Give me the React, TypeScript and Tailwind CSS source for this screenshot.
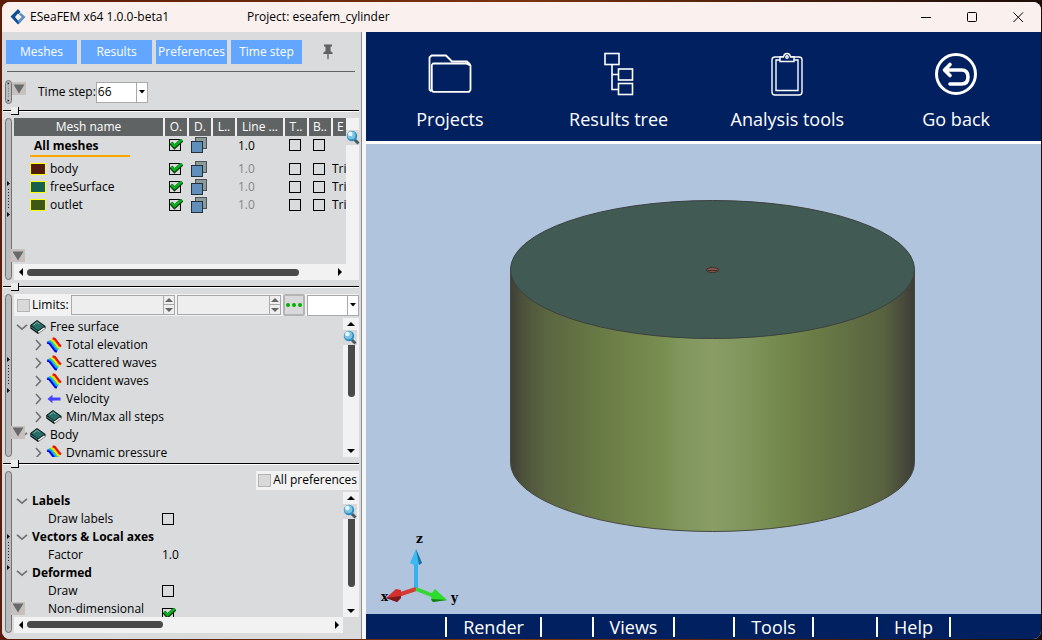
import React, { useState } from 'react';
import clsx from 'clsx';

const meshes = [
  { name: 'body', swatch: 'bg-[#4f1a10]' },
  { name: 'freeSurface', swatch: 'bg-[#18604f]' },
  { name: 'outlet', swatch: 'bg-[#3f5714]' },
];

const results = [
  { name: 'Free surface', icon: 'book', level: 0 },
  { name: 'Total elevation', icon: 'contour', level: 1 },
  { name: 'Scattered waves', icon: 'contour', level: 1 },
  { name: 'Incident waves', icon: 'contour', level: 1 },
  { name: 'Velocity', icon: 'arrow', level: 1 },
  { name: 'Min/Max all steps', icon: 'book', level: 1 },
  { name: 'Body', icon: 'book', level: 0 },
  { name: 'Dynamic pressure', icon: 'contour', level: 1 },
];

/* ---------- Icons ---------- */

const LogoIcon = () => (
  <svg width="16" height="16" viewBox="0 0 16 16" className="shrink-0">
    <path d="M8 0 L0.5 7.5 L8 15.5 L10.5 13 L6 8 L10.5 3 Z" fill="#0b4f96" />
    <path d="M11 4 L15.5 8 L9.5 14.5 L7.5 12 L11.5 8 L8.5 5.5 Z" fill="#5d8fc4" />
    <path d="M8 4.5 L11.5 8 L8 11.5 L5 8 Z" fill="#faf1ee" />
  </svg>
);

const PinIcon = () => (
  <svg width="12" height="16" viewBox="0 0 12 16" fill="#5f6363">
    <path d="M2 0.5 h8 v2 h-1.5 v4.5 q2.3 0.8 2.3 3 h-9.6 q0 -2.2 2.3 -3 V2.5 H2 Z" />
    <path d="M5.3 10 h1.4 v4 l-0.7 2 l-0.7 -2 Z" />
  </svg>
);

const MagnifierIcon = () => (
  <svg width="14" height="15" viewBox="0 0 14 15">
    <rect width="14" height="15" fill="#d9d9dc" />
    <path d="M8.5 9.5 L12.5 13.5" stroke="#4d5960" strokeWidth="3" />
    <circle cx="6" cy="6" r="5.2" fill="#2f8fc0" />
    <circle cx="5.4" cy="5.2" r="4" fill="#7cc3e4" />
    <circle cx="4.4" cy="4" r="2.2" fill="#e8f7ff" />
  </svg>
);

const BookIcon = () => (
  <svg width="16" height="14" viewBox="0 0 16 14" className="shrink-0">
    <path d="M0.3 5 L7 0 L15.5 6 V8.6 L8 14 L0.3 8.5 Z" fill="#0c1212" />
    <path d="M1.3 5.2 L7 1 L14.3 6.2 L8 10.6 Z" fill="#276e68" />
    <path d="M3.6 5 L7.2 2.4 L9.5 4" stroke="#77b5ad" fill="none" />
    <path d="M8.3 12.3 L14.6 7.8" stroke="#ffffff" strokeWidth="1.5" fill="none" />
    <path d="M1.2 7 L7.6 11.6" stroke="#2f7f78" strokeWidth="1.2" fill="none" />
  </svg>
);

const ContourIcon = () => (
  <svg width="16" height="16" viewBox="0 0 16 16" fill="none" strokeWidth="2" className="shrink-0">
    <path d="M1.2 5.4 L3.4 6 L9.6 14 L11 14.2" stroke="#0000e8" strokeWidth="2.6" />
    <path d="M2.6 4.2 L4.8 5 L10.4 12.4 L12 12.8" stroke="#0aa8ff" />
    <path d="M4 3.4 L6 4 L11.4 11 L12.8 11.8" stroke="#3fe04a" strokeWidth="1.4" />
    <path d="M5.2 2.8 L7 3.2 L12.2 10 L13.4 10.6" stroke="#ffe500" />
    <path d="M6.6 1.4 L8.8 2 L13.6 8.4 L15 9.2" stroke="#f01000" strokeWidth="2.4" />
  </svg>
);

const VelocityIcon = () => (
  <svg width="14" height="10" viewBox="0 0 14 10" fill="#4444ff">
    <path d="M0.5 5 L5.5 0.8 V3.6 H13.5 V6.4 H5.5 V9.2 Z" />
  </svg>
);

const LayersIcon = () => (
  <svg width="17" height="16" viewBox="0 0 17 16">
    <rect x="4.5" y="0.5" width="11" height="11" fill="#8d9a9b" stroke="#4b5354" />
    <rect x="0.5" y="4.5" width="11" height="11" fill="#5f8fba" stroke="#23303a" />
  </svg>
);

const Chevron: React.FC<{ open?: boolean }> = ({ open }) => (
  <svg width="12" height="12" viewBox="0 0 12 12" fill="none" stroke="#6f7173" strokeWidth="1.6">
    {open ? <path d="M1 3.8 L6 8.2 L11 3.8" /> : <path d="M4 1 L8.5 6 L4 11" />}
  </svg>
);

const FolderIcon = () => (
  <svg width="44" height="42" viewBox="0 0 44 42" fill="none" stroke="#fff" strokeWidth="1.8" strokeLinejoin="round">
    <path d="M3.5 38.5 L1.5 36.5 V4.5 L3.5 2.5 H18 L24 8.5 H39 L42.5 12" />
    <path d="M5 10.5 H38 L42.5 12.5 V37 L41 38.8 H5 L3.8 37 V12 Z" />
    <path d="M24 8.5 H37 Q40 8.5 40 11" strokeWidth="1" />
  </svg>
);

const TreeIcon = () => (
  <svg width="30" height="44" viewBox="0 0 30 44" fill="none" stroke="#fff" strokeWidth="1.6">
    <rect x="1" y="1.5" width="14" height="11" />
    <rect x="14.5" y="17" width="14" height="11" />
    <rect x="14.5" y="31.5" width="14" height="11" />
    <path d="M8 12.5 V37.5 H14.5 M8 22.5 H14.5" />
  </svg>
);

const ClipboardIcon = () => (
  <svg width="32" height="44" viewBox="0 0 32 44" fill="none" stroke="#fff" strokeWidth="1.4">
    <rect x="1" y="5" width="30" height="38" rx="3" />
    <path d="M9 8 H5 V38.5 H27 V8 H23" />
    <path d="M9 5 H12.5 Q13 1.5 16 1.5 Q19 1.5 19.5 5 H23 V9.5 H9 Z" fill="#00205f" />
    <circle cx="16" cy="5" r="1.2" />
  </svg>
);

const GoBackIcon = () => (
  <svg width="44" height="44" viewBox="0 0 44 44" fill="none" stroke="#fff" strokeLinecap="round" strokeLinejoin="round">
    <circle cx="22" cy="22" r="19.5" strokeWidth="3" />
    <path d="M16 12.5 L10.5 18 L16 23.5 M11 18 H27.5 Q34 18 34 25 Q34 32 27.5 32 H16" strokeWidth="3.6" />
  </svg>
);

/* ---------- Small controls ---------- */

interface CheckProps {
  label: string;
  checked?: boolean;
  grey?: boolean;
}

const Check: React.FC<CheckProps> = ({ label, checked = false, grey }) => {
  const [on, setOn] = useState(checked);
  return (
    <span className="relative flex">
      <input
        type="checkbox"
        aria-label={label}
        checked={on}
        onChange={() => setOn(!on)}
        className={clsx(
          'm-0 appearance-none border',
          grey ? 'size-[13px] border-[#b4b4b4] bg-[#d9d9d9]' : 'size-3 border-black'
        )}
      />
      {on && (
        <svg width="14" height="12" viewBox="0 0 14 12" className="pointer-events-none absolute left-0 top-0">
          <path d="M2 4 L5.5 8 L13 1" stroke="#0b3d0b" strokeWidth="4" fill="none" />
          <path d="M2 3.5 L5.5 7 L13 0.500" stroke="#0cb020" strokeWidth="2.400" fill="none" />
        </svg>
      )}
    </span>
  );
};

const Grip: React.FC = () => (
  <div className="flex w-[7px] shrink-0 flex-col items-center justify-center rounded-sm border border-[#6f7173] bg-[#babbbc]">
    <svg width="5" height="40" viewBox="0 0 5 40" className="max-h-full">
      <path d="M1 2 L4 4.5 L1 7 Z M1 33 L4 35.5 L1 38 Z" fill="#111" />
      <path d="M2.5 10 V31" stroke="#222" strokeDasharray="1 2" />
    </svg>
  </div>
);

const Fold: React.FC<{ className?: string }> = ({ className }) => (
  <button aria-label="Collapse panel" className={clsx('flex h-[13px] w-[14px] items-center justify-center bg-[#c8bfbf]', className)}>
    <svg width="12" height="10" viewBox="0 0 12 10">
      <path d="M0.5 0.5 H11.5 L6 9.5 Z" fill="#666a6a" />
    </svg>
  </button>
);

const Sash = () => (
  <div className="relative flex h-[14px] shrink-0 items-center">
    <div className="h-0.5 w-full border-b border-white bg-black" />
    <div className="absolute left-2 top-[3px] size-2 border-b border-r border-black bg-[#ececec]" />
  </div>
);

type Direction = 'up' | 'down' | 'left' | 'right';

const arrowPaths: Record<Direction, string> = {
  up: 'M0 6 L4 2 L8 6 Z',
  down: 'M0 2 L4 6 L8 2 Z',
  left: 'M6 0 L2 4 L6 8 Z',
  right: 'M2 0 L6 4 L2 8 Z',
};

const ArrowButton: React.FC<{ dir: Direction; className?: string; fill?: string }> = ({ dir, className, fill = '#000' }) => (
  <button aria-label={`Scroll ${dir}`} className={clsx('flex shrink-0 items-center justify-center', className)}>
    <svg width="8" height="8" viewBox="0 0 8 8" fill={fill}>
      <path d={arrowPaths[dir]} />
    </svg>
  </button>
);

const VerticalBar: React.FC<{ thumb: string }> = ({ thumb }) => (
  <div className="relative flex w-4 shrink-0 flex-col items-center bg-[#f2f2f2]">
    <ArrowButton dir="up" className="h-3 w-full" />
    <div className="w-full flex-1">
      <div className={clsx('mx-auto w-[7px] rounded-full bg-[#4a4a4a]', thumb)} />
    </div>
    <ArrowButton dir="down" className="h-3 w-full" />
    <div className="absolute left-0 top-3">
      <MagnifierIcon />
    </div>
  </div>
);

const HorizontalBar: React.FC<{ thumb: string; right: string }> = ({ thumb, right }) => (
  <div className={clsx('flex h-4 shrink-0 items-center bg-[#f2f2f2]', right)}>
    <ArrowButton dir="left" className="h-full w-[13px]" />
    <div className="flex-1">
      <div className={clsx('h-[7px] rounded-full bg-[#4a4a4a]', thumb)} />
    </div>
    <ArrowButton dir="right" className="h-full w-[13px]" />
  </div>
);

const SpinBox: React.FC<{ label: string }> = ({ label }) => (
  <div className="flex h-5 min-w-0 flex-1 border border-[#a9a9a9] bg-[#eeeeee]">
    <input aria-label={label} className="w-0 min-w-0 flex-1 px-1 outline-none" />
    <div className="flex w-[11px] flex-col border-l border-[#a9a9a9]">
      <ArrowButton dir="up" fill="#666" className="h-[9px] border-b border-[#a9a9a9]" />
      <ArrowButton dir="down" fill="#666" className="h-[9px]" />
    </div>
  </div>
);

const Combo: React.FC<{ label: string; options: string[]; className?: string }> = ({ label, options, className }) => (
  <div className={clsx('relative flex h-[21px] shrink-0 border border-[#a9a9a9] bg-white', className)}>
    <select aria-label={label} className="h-full w-full appearance-none px-px outline-none">
      {options.map((o) => (
        <option key={o}>{o}</option>
      ))}
    </select>
    <div className="pointer-events-none absolute right-0 top-0 flex h-full w-[11px] items-center justify-center border-l border-[#a9a9a9]">
      <svg width="6" height="4" viewBox="0 0 6 4">
        <path d="M0 0 H6 L3 3.5 Z" />
      </svg>
    </div>
  </div>
);

/* ---------- Left side panels ---------- */

const headClass = 'h-[18px] truncate border-r-2 border-[#f0f0f0] p-0 text-center font-normal';

const IconCell: React.FC<{ children: React.ReactNode }> = ({ children }) => (
  <td className="p-0">
    <div className="flex h-[18px] items-center justify-center pr-0.5">{children}</div>
  </td>
);

const MeshPanel = () => (
  <section className="relative flex min-h-0 min-w-0 flex-1 gap-0.5">
    <Grip />
    <div className="flex min-w-0 flex-1 flex-col">
      <div className="flex min-h-0 flex-1">
        <div className="min-w-0 flex-1 overflow-hidden">
          <table className="w-[342px] table-fixed border-collapse">
            <colgroup>
              <col className="w-[150px]" />
              <col className="w-6" />
              <col className="w-6" />
              <col className="w-6" />
              <col className="w-12" />
              <col className="w-6" />
              <col className="w-6" />
              <col className="w-6" />
            </colgroup>
            <thead className="bg-[#5f6363] text-white">
              <tr>
                {['Mesh name', 'O.', 'D.', 'L..', 'Line ...', 'T..', 'B..'].map((h) => (
                  <th key={h} className={headClass}>{h}</th>
                ))}
                <th className="p-0 pl-1 text-left font-normal">E</th>
              </tr>
            </thead>
            <tbody>
              <tr className="h-6 align-top">
                <td className="p-0">
                  <div className="ml-4 w-[100px] border-b-2 border-[#ffa500] pl-1 leading-[19px] font-bold">All meshes</div>
                </td>
                <IconCell><Check label="All meshes on" checked /></IconCell>
                <IconCell><LayersIcon /></IconCell>
                <td />
                <td className="p-0 pl-0.5 leading-[19px]">1.0</td>
                <IconCell><Check label="All meshes transparent" /></IconCell>
                <IconCell><Check label="All meshes border" /></IconCell>
                <td />
              </tr>
              {meshes.map((m) => (
                <tr key={m.name} className="h-[18px] leading-[18px]">
                  <td className="p-0">
                    <div className="flex items-center gap-1 pl-4">
                      <span className={clsx('h-3 w-4 border border-[#ffff00]', m.swatch)} />
                      {m.name}
                    </div>
                  </td>
                  <IconCell><Check label={`${m.name} on`} checked /></IconCell>
                  <IconCell><LayersIcon /></IconCell>
                  <td />
                  <td className="p-0 pl-0.5 text-[#858789]">1.0</td>
                  <IconCell><Check label={`${m.name} transparent`} /></IconCell>
                  <IconCell><Check label={`${m.name} border`} /></IconCell>
                  <td className="p-0">Tri</td>
                </tr>
              ))}
            </tbody>
          </table>
        </div>
        <div className="relative w-[13px] shrink-0 bg-[#f2f2f2]">
          <div className="absolute left-0 top-3">
            <MagnifierIcon />
          </div>
        </div>
      </div>
      <HorizontalBar thumb="w-[89%]" right="pr-[13px]" />
    </div>
    <Fold className="absolute bottom-[18px] left-1.5" />
  </section>
);

const ResultsPanel = () => (
  <section className="relative flex min-h-0 min-w-0 flex-1 gap-0.5">
    <Grip />
    <div className="flex min-w-0 flex-1 flex-col">
      <div className="mb-0.5 flex h-[22px] shrink-0 items-center gap-0.5 bg-[#f2f2f2] pl-[3px]">
        <label className="flex items-center gap-0.5">
          <Check label="Limits" grey />
          Limits:
        </label>
        <SpinBox label="Minimum" />
        <SpinBox label="Maximum" />
        <button aria-label="More options" className="flex h-[22px] w-[22px] items-center justify-center gap-0.5 rounded-xs border-2 border-[#b4b4b4] bg-[#d9d9d9]">
          <span className="size-1 rounded-full bg-[#00b000]" />
          <span className="size-1 rounded-full bg-[#00b000]" />
          <span className="size-1 rounded-full bg-[#00b000]" />
        </button>
        <Combo label="Units" options={['']} className="w-[52px]" />
      </div>
      <div className="flex min-h-0 flex-1">
        <ul className="min-w-0 flex-1 overflow-hidden">
          {results.map((r) => (
            <li key={r.name} className={clsx('flex h-[18px] items-center', r.level ? 'pl-[18px]' : 'pl-0.5')}>
              <button aria-label={`Toggle ${r.name}`} className="w-3">
                <Chevron open={r.level === 0} />
              </button>
              <span className="ml-0.5 flex w-4 justify-center">
                {r.icon === 'book' && <BookIcon />}
                {r.icon === 'contour' && <ContourIcon />}
                {r.icon === 'arrow' && <VelocityIcon />}
              </span>
              <span className="ml-1">{r.name}</span>
            </li>
          ))}
        </ul>
        <VerticalBar thumb="h-[67px]" />
      </div>
    </div>
    <Fold className="absolute bottom-[18px] left-1.5" />
  </section>
);

const PrefGroup: React.FC<{ title: string }> = ({ title }) => (
  <div className="flex h-[18px] items-center gap-1 pl-0.5 font-bold">
    <button aria-label={`Toggle ${title}`}>
      <Chevron open />
    </button>
    {title}
  </div>
);

const PrefRow: React.FC<{ label: string; tall?: boolean; children: React.ReactNode }> = ({ label, tall, children }) => (
  <div className={clsx('flex pl-[34px]', tall ? 'h-7' : 'h-[18px]')}>
    <span className="w-[114px] leading-[18px]">{label}</span>
    <span className="flex items-center">{children}</span>
  </div>
);

const PreferencesPanel = () => (
  <section className="relative flex min-h-0 min-w-0 flex-1 gap-0.5">
    <Grip />
    <div className="flex min-w-0 flex-1 flex-col">
      <label className="mb-0.5 flex h-[19px] shrink-0 items-center gap-0.5 self-end bg-[#f2f2f2] px-0.5">
        <Check label="All preferences" grey />
        All preferences
      </label>
      <div className="flex min-h-0 flex-1">
        <div className="min-w-0 flex-1 overflow-hidden">
          <PrefGroup title="Labels" />
          <PrefRow label="Draw labels"><Check label="Draw labels" /></PrefRow>
          <PrefGroup title="Vectors &amp; Local axes" />
          <PrefRow label="Factor">1.0</PrefRow>
          <PrefGroup title="Deformed" />
          <PrefRow label="Draw"><Check label="Draw" /></PrefRow>
          <PrefRow label="Non-dimensional" tall><Check label="Non-dimensional" checked /></PrefRow>
        </div>
        <VerticalBar thumb="h-[83px]" />
      </div>
      <HorizontalBar thumb="w-[45%]" right="mr-4" />
    </div>
    <Fold className="absolute bottom-[18px] left-1.5" />
  </section>
);

const tabs = ['Meshes', 'Results', 'Preferences', 'Time step'];

const Sidebar = () => (
  <aside className="flex w-[359px] shrink-0 flex-col bg-[#d9dbdd] pb-1.5 pl-px pr-0.5">
    <div className="flex items-center gap-1 pl-[3px] pt-2">
      {tabs.map((t) => (
        <button key={t} className="h-6 w-[71px] bg-[#62a6ff] text-white">{t}</button>
      ))}
      <button aria-label="Pin panel" className="ml-4">
        <PinIcon />
      </button>
    </div>
    <div className="mx-1 mb-2 mt-[7px] h-px shrink-0 bg-[#5f6363]" />
    <div className="flex h-6 shrink-0 pl-0.5">
      <Grip />
      <Fold className="mt-0.5" />
      <label className="ml-3 flex items-center">
        Time step:
        <Combo label="Time step" options={['66']} className="w-[52px]" />
      </label>
    </div>
    <Sash />
    <div className="flex min-h-0 flex-1 flex-col">
      <div className="flex min-h-0 flex-1 pl-0.5"><MeshPanel /></div>
      <Sash />
      <div className="flex min-h-0 flex-1 pl-0.5"><ResultsPanel /></div>
      <Sash />
      <div className="flex min-h-0 flex-1 pl-0.5"><PreferencesPanel /></div>
    </div>
  </aside>
);

/* ---------- Model view ---------- */

const Cylinder = () => (
  <svg viewBox="0 0 675 470" className="h-full w-full">
    <defs>
      <linearGradient id="side">
        <stop offset="0" stopColor="#3e3e38" />
        <stop offset="0.03" stopColor="#4d513b" />
        <stop offset="0.09" stopColor="#5b6641" />
        <stop offset="0.24" stopColor="#6b7d46" />
        <stop offset="0.37" stopColor="#788c50" />
        <stop offset="0.42" stopColor="#80965d" />
        <stop offset="0.5" stopColor="#899d65" />
        <stop offset="0.58" stopColor="#80965d" />
        <stop offset="0.65" stopColor="#768b4e" />
        <stop offset="0.76" stopColor="#6a7b46" />
        <stop offset="0.92" stopColor="#596340" />
        <stop offset="0.97" stopColor="#4a4c3b" />
        <stop offset="1" stopColor="#3c3c38" />
      </linearGradient>
    </defs>
    <path d="M144.5 126 V318.5 A202 69 0 0 0 548.5 318.5 V126 Z" fill="url(#side)" stroke="#47493f" />
    <ellipse cx="346.5" cy="125.5" rx="202" ry="69" fill="#415a53" stroke="#3c403e" />
    <ellipse cx="346.5" cy="126" rx="6" ry="2.5" fill="#8a5548" stroke="#3a2f2e" />
    <path d="M342 126.5 H351" stroke="#3a2f2e" />
  </svg>
);

const AxisTriad = () => (
  <svg width="84" height="90" viewBox="0 -12 84 90" className="absolute bottom-0 left-3">
    <path d="M38 54 V24" stroke="#35b2ee" strokeWidth="4" />
    <path d="M38 13 L32 27 Q38 31 44 27 Z" fill="#3cb9f2" />
    <path d="M38 13 L41 29 L44 27 Z" fill="#1d6f99" />
    <path d="M38 53 L20 59" stroke="#d83a34" strokeWidth="4" />
    <path d="M8 62 L18 53 L23 54 L23 62 L19 66 Z" fill="#d42f2f" />
    <path d="M8 62 L23 60 V62 L19 66 Z" fill="#7c1a1a" />
    <path d="M38 53 L56 60" stroke="#37d637" strokeWidth="4" />
    <path d="M69 64 L57 53 L54 57 L53 64 L55 66 Z" fill="#2bdc2b" />
    <path d="M69 64 L53 63 L55 66 Z" fill="#167a16" />
    <g className="font-['DejaVu_Serif',serif] text-xs font-bold">
      <text x="38" y="7">z</text>
      <text x="3" y="65">x</text>
      <text x="73" y="66">y</text>
    </g>
  </svg>
);

const actions = [
  { label: 'Projects', Icon: FolderIcon },
  { label: 'Results tree', Icon: TreeIcon },
  { label: 'Analysis tools', Icon: ClipboardIcon },
  { label: 'Go back', Icon: GoBackIcon },
];

const Workspace = () => (
  <main className="flex min-w-0 flex-1 flex-col">
    <nav className="grid h-[109px] shrink-0 grid-cols-4 bg-[#00205f] text-white">
      {actions.map(({ label, Icon }) => (
        <button key={label} className="flex flex-col items-center pr-px pt-5 text-lg leading-6">
          <span className="mb-[11px] flex h-11 items-center">
            <Icon />
          </span>
          {label}
        </button>
      ))}
    </nav>
    <div className="relative min-h-0 flex-1 border-t-[3px] border-white bg-[#b0c4de]">
      <Cylinder />
      <AxisTriad />
    </div>
    <footer className="flex h-[25px] shrink-0 items-center justify-center bg-[#00205f] text-lg leading-6 text-white">
      {['Render', 'Views', 'Tools', 'Help'].map((item) => (
        <div key={item} className="flex w-[140px] justify-center">
          <button className="h-5 border-x-2 border-white px-4 leading-5">{item}</button>
        </div>
      ))}
    </footer>
  </main>
);

const TitleBar = () => (
  <header className="flex h-[30px] shrink-0 items-center bg-[#faf1ee] pl-2">
    <LogoIcon />
    <span className="ml-1 w-[217px]">ESeaFEM x64 1.0.0-beta1</span>
    <span>Project: eseafem_cylinder</span>
    <div className="ml-auto flex h-full">
      <button aria-label="Minimize" className="flex w-[46px] items-center justify-center">
        <svg width="11" height="11" stroke="#000"><path d="M0 5.5 H10" /></svg>
      </button>
      <button aria-label="Maximize" className="flex w-[46px] items-center justify-center">
        <svg width="11" height="11" fill="none" stroke="#000"><rect x="0.5" y="0.5" width="9" height="9" rx="1" /></svg>
      </button>
      <button aria-label="Close" className="flex w-[46px] items-center justify-center">
        <svg width="11" height="11" stroke="#000"><path d="M0.5 0.5 L10 10 M10 0.5 L0.5 10" /></svg>
      </button>
    </div>
  </header>
);

const App: React.FC = () => {
  return (
    <div className="h-screen bg-linear-to-r from-[#5c1c0a] via-[#7a3208] to-[#1c0d08] pb-px pl-0.5 pr-px pt-0.5 font-['Open_Sans',sans-serif] text-xs text-black">
      <div className="flex h-full flex-col overflow-hidden rounded-lg bg-[#f7f7f7]">
        <TitleBar />
        <div className="flex min-h-0 flex-1">
          <Sidebar />
          <div className="w-[5px] shrink-0 border-l border-[#8a8c8e] bg-[#f7f7f7]" />
          <Workspace />
        </div>
      </div>
    </div>
  );
};

export default App;
